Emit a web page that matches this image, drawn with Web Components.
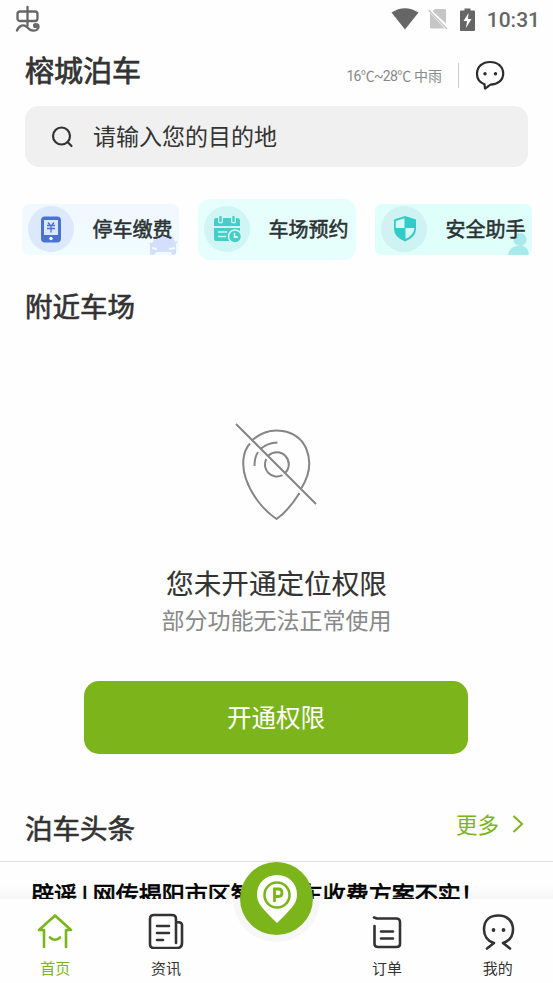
<!DOCTYPE html>
<html lang="zh-CN">
<head>
<meta charset="utf-8">
<title>榕城泊车</title>
<style>
html, body { margin: 0; background: #fefefe; }
body { width: 553px; height: 983px; overflow: hidden; font-family: "Roboto", "Noto Sans CJK SC", sans-serif; color: #333; }
</style>
</head>
<body>
<parking-app></parking-app>
<script>
function define(name, css, html) {
  const template = document.createElement('template');
  template.innerHTML = `<style>*{box-sizing:border-box}svg{display:block;flex:none}${css}</style>${html}`;
  customElements.define(name, class extends HTMLElement {
    constructor() {
      super();
      this.attachShadow({ mode: 'open' }).append(template.content.cloneNode(true));
    }
  });
}

define('status-bar', `
:host{display:flex;height:38px;padding:0 13px 0 15px;align-items:center;color:#666;fill:#666}
.gap{flex:1}
.wifi{margin-right:9px}.sim{margin-right:12px}.bat{margin-right:12px}
time{font:500 21px/38px Roboto,sans-serif;height:38px;padding-top:1px}
`, `
<svg width="26" height="28" viewBox="0 0 26 28" fill="none" stroke="#666" stroke-width="2.300" stroke-linecap="round"><path d="M12.500 2V20.500"/><rect x="2.500" y="6.500" width="20" height="9.500" rx="2.500"/><path d="M2 25.500C4 20 9 19 12.500 22.500C15.500 26 19 26 21.500 25C24 23.500 24 20.500 22.500 19.500"/><circle cx="20.500" cy="20.500" r="1.400"/></svg>
<span class="gap"></span>
<svg class="wifi" width="28" height="22" viewBox="0 0 28 22"><path d="M.5 4.500Q14-4 27.500 4.500L14 21.500Z"/></svg>
<svg class="sim" width="20" height="22" viewBox="0 0 20 22" fill="#c6c6c6"><path d="M7 1H17Q18 1 18 2V15.500L4.500 3.200ZM2 5L16.500 20.500H3Q2 20.500 2 19.500Z"/><path d="M.5 2L19 21" stroke="#c6c6c6" stroke-width="1.500"/></svg>
<svg class="bat" width="15" height="23" viewBox="0 0 15 23"><path d="M1 2.500H4.500V.5H10.500V2.500H14Q15 2.500 15 3.500V22Q15 23 14 23H1Q0 23 0 22V3.500Q0 2.500 1 2.500Z"/><path d="M8.500 5L3.500 13H7L6 20L11.500 11H8Z" fill="#fff"/></svg>
<time>10:31</time>`);

define('app-header', `
:host{display:flex;height:68px;padding:0 48px 0 25px;align-items:flex-start}
h1{margin:0;font-size:29px;line-height:69px;font-weight:400;-webkit-text-stroke:.75px #333}
.weather{margin-left:auto;font-size:14px;line-height:76px;color:#888;white-space:nowrap}
.deg{letter-spacing:-.7px}
i{width:1px;height:25px;margin:25px 16px 0 16px;background:#ccc}
svg{margin-top:22px}
`, `<h1>榕城泊车</h1><span class="weather"><span class="deg">16℃~28℃</span> 中雨</span><i></i>
<svg width="30" height="30" viewBox="0 0 30 30" fill="none" stroke="#2c2c2c" stroke-width="2.200" stroke-linejoin="round"><path d="M9.500 24.300C4.500 22.500 2 18 2 13.800C2 6.500 7.600 2 15 2C22.500 2 28.200 6.500 28.200 13.600C28.200 20.700 22.500 24.500 15.500 24.600C13.500 26 12 27.300 10 28.500Z"/><g fill="#2c2c2c" stroke="none"><circle cx="10" cy="13.700" r="1.700"/><circle cx="20.500" cy="13.700" r="1.700"/></g></svg>`);

define('search-box', `
:host{display:flex;height:61px;margin:0 25px;padding-left:26px;align-items:center;gap:19px;border-radius:14px;background:#f0f0f0;font-size:23px;line-height:60px}
.hint{display:block;padding-top:3px}
`, `<svg width="23" height="23" viewBox="0 0 23 23" fill="none" stroke="#333" stroke-width="2.200" stroke-linecap="round"><circle cx="10.500" cy="11" r="8.500"/><path d="M16.800 17.300L20.500 21"/></svg><span class="hint"><slot></slot></span>`);

define('quick-tile', `
:host{display:flex;position:relative;width:157px;height:51px;border-radius:7px;background:var(--bg);align-items:center;padding:0 0 1px 6px;font-size:20px;line-height:49px;color:#2c3233}
.disc{width:46px;height:46px;border-radius:50%;background:var(--disc);display:grid;place-items:center;margin-right:18.500px;flex:none}
.label{position:relative;-webkit-text-stroke:.55px #2c3233;white-space:nowrap;padding-top:3px}
::slotted([slot=deco]){position:absolute;right:1px;bottom:0}
`, `<slot name="deco"></slot><span class="disc"><slot name="icon"></slot></span><span class="label"><slot></slot></span>`);

define('quick-row', `
:host{display:flex;height:120px;padding:32px 0 0 22px;align-items:flex-start}
svg{display:block}
quick-tile{margin-top:5px}
.pay{--bg:linear-gradient(#f1f8ff,#f0fcff);--disc:#dce8fb}
.book{--bg:#e6fffc;--disc:#cff5f4;margin:0 19px 0 19px;height:61px;border-radius:12px;width:158px}
.safe{--bg:#defffa;--disc:#cff3f2}
.book [slot=icon],.safe [slot=icon]{margin-left:2px}
`, `
<quick-tile class="pay"><svg slot="icon" width="20" height="27" viewBox="0 0 20 27"><rect width="20" height="26" y=".5" rx="4" fill="#4a73d1"/><path d="M3 4H17V19H3Z" fill="#dce8ff"/><path d="M7 6.500L9 9M13 6.500L11 9M6 9.500H14M6 12.500H14M10 9.500V16.500" stroke="#4a73d1" stroke-width="1.300"/><circle cx="10" cy="22.500" r="1.700" fill="#fff"/></svg>停车缴费
<svg slot="deco" width="30" height="20" viewBox="0 0 30 20"><path d="M4 8L8 2Q9 0 12 0H22Q24 0 25 2L27 7L30 6L28 9V18Q28 20 26 20Q23 20 23 17H8Q7 20 5 20Q2 20 2 18V9L0 8Z" fill="#d3dffb"/><path d="M4 12L9 13V15L4 14ZM21 13L27 12V14L21 15Z" fill="#f7fbff"/></svg></quick-tile>
<quick-tile class="book"><svg slot="icon" width="28" height="27" viewBox="0 0 28 27"><path d="M2 2H23Q26 2 26 5V10H0V5Q0 2 2 2ZM0 12H26V25H2Q0 25 0 23Z" fill="#43cfc8"/><path d="M6.500 0V5M19.500 0V5" stroke="#d6f8f6" stroke-width="5" stroke-linecap="round"/><path d="M6.500 1V5M19.500 1V5" stroke="#43cfc8" stroke-width="2.400" stroke-linecap="round"/><path d="M4 16H13M4 20.500H12" stroke="#d6f8f6" stroke-width="1.600"/><circle cx="21" cy="20.500" r="6.500" fill="#43cfc8" stroke="#d6f8f6" stroke-width="1.500"/><path d="M20.500 17V21H24" fill="none" stroke="#fff" stroke-width="1.500"/></svg>车场预约</quick-tile>
<quick-tile class="safe"><svg slot="icon" width="24" height="26" viewBox="0 0 24 26"><path d="M12 0L23 3.500V13Q23 21 12 25.500Q1 21 1 13V3.500Z" fill="#33cbc9"/><path d="M11.500 2.200V12H2.800V5ZM12.500 12H21.500Q21 19 12.500 23Z" fill="#d9f7f5"/></svg>安全助手
<svg slot="deco" width="24" height="23" viewBox="0 0 24 23" fill="#a8eaea"><circle cx="13" cy="7.500" r="6.500"/><path d="M1 23Q2 16 9 14H16Q21 15 22 23Z"/></svg></quick-tile>`);

define('section-head', `
:host{display:flex;padding:0 28px 0 25px;justify-content:space-between;height:42px;align-items:center}
h2{margin:0;font-size:27.500px;line-height:40px;font-weight:400;-webkit-text-stroke:.65px #333}
`, `<h2><slot></slot></h2><slot name="more"></slot>`);

define('more-link', `
:host{display:flex;align-items:center;gap:12px;font-size:21.500px;line-height:32px;color:#7cb51b;margin-top:-9px}
svg{margin-top:-3px}
`, `<slot></slot><svg width="14" height="18" viewBox="0 0 14 18" fill="none" stroke="#7cb51b" stroke-width="2"><path d="M2.500 1L11 9L2.500 17"/></svg>`);

define('location-empty', `
:host{display:flex;flex-direction:column;align-items:center;height:480px;padding-top:94px}
svg{margin-right:2px}
.t{font-size:27.600px;line-height:40px;margin-top:42px;-webkit-text-stroke:.15px #333}
.s{font-size:23px;line-height:36px;color:#888;margin-top:-1px}
button{margin:41px 1px 0 0;border:0;width:384px;height:73px;border-radius:15px;background:#7cb51b;color:#fff;font-family:inherit;font-size:24.500px;line-height:71px;padding:2px 0 0}
`, `
<svg width="84" height="100" viewBox="0 0 84 100" fill="none" stroke="#858585" stroke-width="2"><path d="M2 1L82 81"/><path d="M18 17.500C36 1 63 6 72 25C78 39 75 53 67.500 65M65.500 70C58 82 50 91 42.500 96C29 87 17 71 12 56C7 42 9 28 16 20.500"/><path d="M26.500 26Q33 20 43.500 19.500M24 29Q20.500 34 20.500 43M34.500 32.500A12 12 0 0 1 51 50M48.500 52.200A12 12 0 0 1 32.300 36"/></svg>
<div class="t">您未开通定位权限</div><div class="s">部分功能无法正常使用</div><button>开通权限</button>`);

define('news-item', `
:host{display:block;height:38px;margin-top:10px;border-top:1px solid #e2e2e2;padding-left:31px;overflow:hidden;font-size:23px;line-height:70px;color:#000;white-space:nowrap;background:linear-gradient(#fefefe 65%,#f5f5f5)}
.text{display:block;margin-top:-1px;-webkit-text-stroke:.75px #000;word-spacing:-.6px}
`, `<span class="text"><slot></slot></span>`);

define('tab-item', `
:host{display:flex;flex-direction:column;align-items:center;font-size:15px;line-height:22px;flex:1;padding-top:14px;color:var(--c,#333)}
.icon{height:36px;display:block;margin-bottom:9px}
.label{display:block}
`, `<span class="icon"><slot name="icon"></slot></span><span class="label"><slot></slot></span>`);

define('tab-bar', `
:host{display:flex;position:relative;height:84px;background:#fefefe}
svg{fill:none;stroke:#333;stroke-width:2.600;stroke-linecap:round;stroke-linejoin:round}
.active{--c:#7cb51b}.active svg{stroke:#7cb51b}
.space{flex:1}
.halo{position:absolute;left:233px;top:0;width:87px;height:43px;border-radius:0 0 44px 44px;background:#f7f7f7}
.fab{position:absolute;left:240px;top:-37px;width:73px;height:73px;border-radius:50%;background:#7cb51b;display:grid;place-items:center}
`, `
<div class="halo"></div>
<tab-item class="active"><svg slot="icon" width="36" height="36" viewBox="0 0 36 36"><path d="M7 34V17H2L18 2.500L34 17H29V34M13 24.500Q18 29 23 24.500"/></svg>首页</tab-item>
<tab-item><svg slot="icon" width="36" height="36" viewBox="0 0 36 36"><path d="M28 30V6Q28 2 24 2H6Q2 2 2 6V31Q2 35 6 35H29Q34 35 34 30V12Q34 9 28.500 9M9 13H21M9 20H21M9 27H15"/></svg>资讯</tab-item>
<span class="space"></span>
<tab-item><svg slot="icon" width="36" height="36" viewBox="0 0 36 36"><path d="M5 4.500L8 5.500H27Q31 5.500 31 9V31Q31 34 27.500 34H9Q5.500 34 5.500 31V13M12 18.500H24M12 25.500H24"/></svg>订单</tab-item>
<tab-item><svg slot="icon" width="36" height="38" viewBox="0 0 36 38"><path d="M7 35.500L14 30C7 28 4 22 4 16.500C4 7 10 2.500 18.500 2.500C27 2.500 33 8 33 16.500C33 23 29 28 23 30L30 35.500"/><g fill="#333" stroke="none"><circle cx="13.500" cy="17" r="1.900"/><circle cx="23.500" cy="17" r="1.900"/></g></svg>我的</tab-item>
<div class="fab"><svg width="42" height="50" viewBox="0 0 42 50"><path d="M21 1C9 1 1 9.500 1 20.500C1 30 7 35 21 49C35 35 41 30 41 20.500C41 9.500 33 1 21 1Z" fill="#fff" stroke="none"/><circle cx="21" cy="21" r="12.500" stroke="#7cb51b" stroke-width="2.600"/><path d="M18.500 28V15H22.500Q26 15 26 18.700Q26 22.500 22.500 22.500H18.500" stroke="#7cb51b" stroke-width="2.800" stroke-linecap="butt" stroke-linejoin="miter"/></svg></div>`);

define('parking-app', `
:host{display:flex;flex-direction:column;width:553px;height:983px;background:#fefefe;overflow:hidden}
:host>*{flex:none}
status-bar,app-header,search-box,quick-row,section-head,location-empty,news-item,tab-bar{flex:none}
`, `
<status-bar></status-bar><app-header></app-header><search-box>请输入您的目的地</search-box><quick-row></quick-row>
<section-head>附近车场</section-head>
<location-empty></location-empty>
<section-head>泊车头条<more-link slot="more">更多</more-link></section-head>
<news-item>辟谣 | 网传揭阳市区智慧停车收费方案不实！</news-item>
<tab-bar></tab-bar>`);
</script>
</body>
</html>
